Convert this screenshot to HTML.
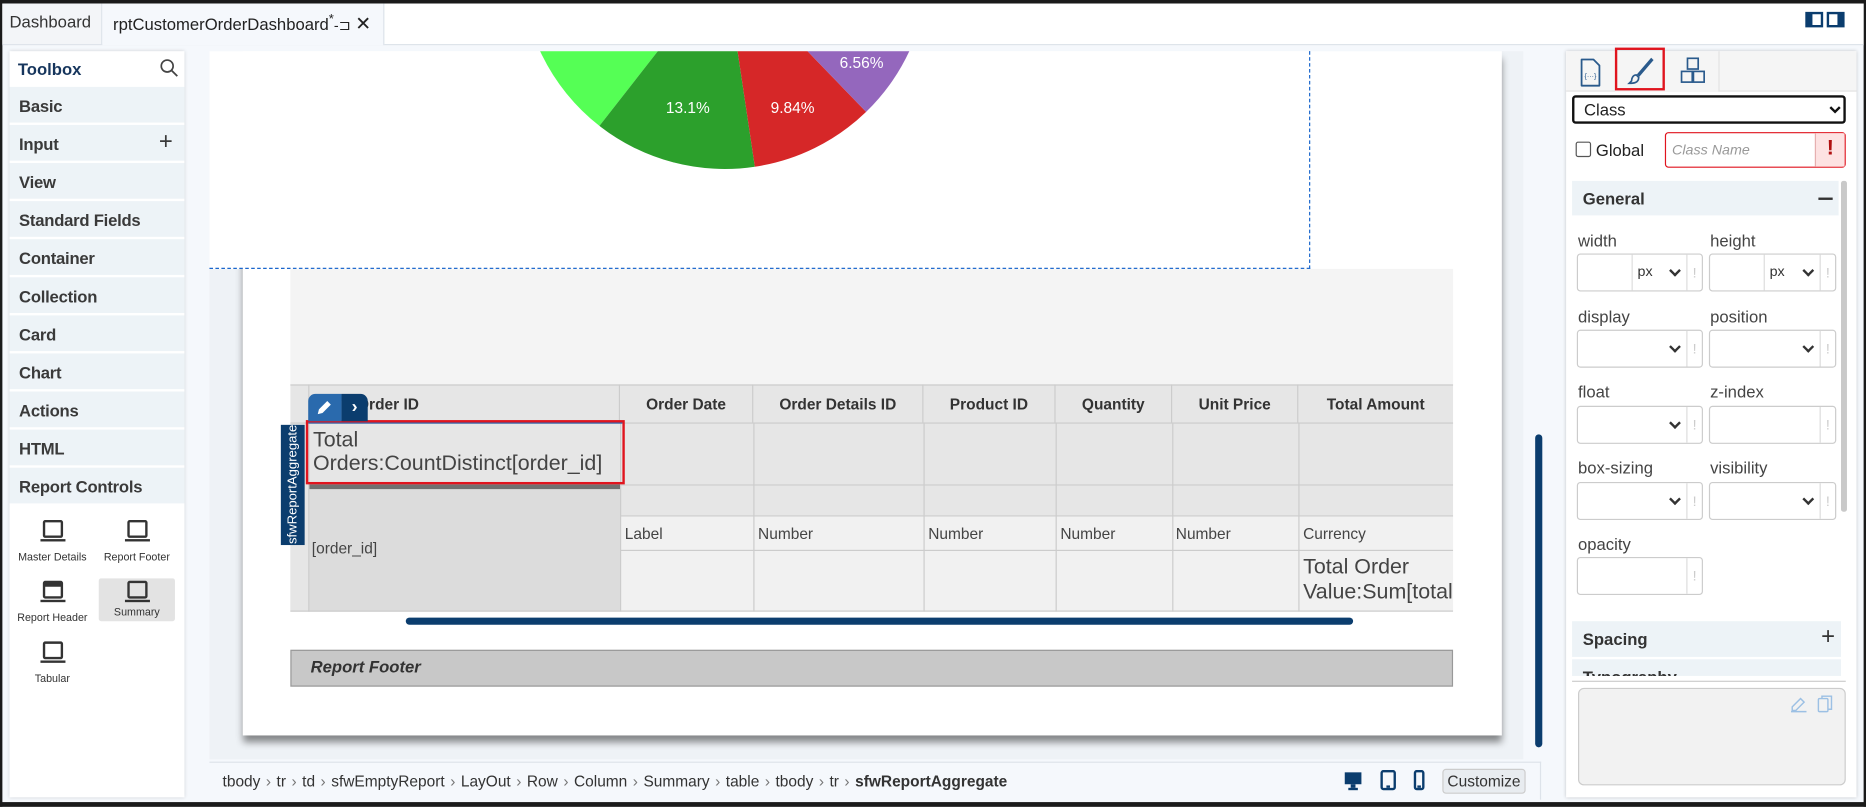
<!DOCTYPE html>
<html><head><meta charset="utf-8"><style>
*{box-sizing:border-box;margin:0;padding:0}
html,body{width:1866px;height:807px;overflow:hidden;background:#000}
#w{position:absolute;left:0;top:0;width:1568px;height:678px;transform:scale(1.19005);transform-origin:0 0;font-family:"Liberation Sans",sans-serif;color:#333;background:#f5f8fc;overflow:hidden}
.a{position:absolute}
.ti{position:absolute;left:8px;width:147px;height:30px;background:#edf3f7;font-size:14px;font-weight:bold;color:#3a3a3a;padding:8px 0 0 8px;letter-spacing:-.2px}
.tile{position:absolute;width:64px;height:49px;font-size:9px;color:#333;text-align:center;padding-top:34px;background:#fff;border-radius:2px}
.tile i{position:absolute;left:24px;top:8px;width:17px;height:15px;border:2px solid #333;border-radius:2px}
.tile i:after{content:"";position:absolute;left:-4px;right:-4px;bottom:-5px;height:2px;background:#333}
.th{position:absolute;top:323px;height:32px;font-size:13px;font-weight:bold;color:#333;text-align:center;padding-top:9px;border-right:1px solid #ccc}
.cl{position:absolute;background:#ccc}
.lb{position:absolute;font-size:14px;color:#444}
.inp{position:absolute;height:32px;border:1px solid #ccc;border-radius:3px;background:#fff}
.inp .ex{position:absolute;right:0;top:0;width:13px;height:30px;border-left:1px solid #ddd;color:#ccc;font-size:12px;text-align:center;padding-top:8px}
.inp .cv{position:absolute;top:7px;font-size:12px;color:#333}
.ch{position:absolute;top:10px;width:7px;height:7px;border-right:2px solid #333;border-bottom:2px solid #333;transform:rotate(45deg)}
.bc{font-size:13px;color:#333}
</style></head><body><div id="w">
<div class="a" style="left:0;top:0;width:1568px;height:3px;background:#1a1a1a"></div>
<div class="a" style="left:0;top:0;width:2px;height:678px;background:#1a1a1a"></div>
<div class="a" style="right:0;top:0;width:2px;height:678px;background:#1a1a1a"></div>
<div class="a" style="left:0;bottom:0;width:1568px;height:4px;background:#1a1a1a"></div>
<div class="a" style="left:2px;top:3px;width:1564px;height:35px;background:#fff;border-bottom:1px solid #dde3ea"></div>
<div class="a" style="left:2px;top:3px;width:84px;height:34px;background:#f3f5f8;border-right:1px solid #dde3ea;font-size:14px;padding:7px 0 0 6px;color:#333">Dashboard</div>
<div class="a" style="left:86px;top:3px;width:237px;height:35px;background:#f5f8fc;border-right:1px solid #dde3ea;font-size:14px;padding:7px 0 0 9px;color:#222">rptCustomerOrderDashboard<sup style="font-size:11px">*</sup><span style="font-size:12px">-⊐</span> <span style="font-size:16px">✕</span></div>
<div class="a" style="left:1517px;top:10px;width:15px;height:13px;border:2px solid #0b3d6e;border-left-width:6px"></div>
<div class="a" style="left:1535px;top:10px;width:15px;height:13px;border:2px solid #0b3d6e;border-right-width:6px"></div>
<div class="a" style="left:8px;top:43px;width:147px;height:627px;background:#fff;box-shadow:0 0 3px rgba(0,0,0,.15)"></div>
<div class="a" style="left:15px;top:50px;font-size:14px;font-weight:bold;color:#17365d">Toolbox</div>
<svg class="a" style="left:134px;top:49px" width="16" height="16" viewBox="0 0 16 16"><circle cx="6.5" cy="6.5" r="5" fill="none" stroke="#444" stroke-width="1.4"/><path d="M10 10l5 5" stroke="#444" stroke-width="1.5"/></svg>
<div class="ti" style="top:73px">Basic</div>
<div class="ti" style="top:105px">Input<span style="position:absolute;right:10px;top:3px;font-size:20px;font-weight:normal">+</span></div>
<div class="ti" style="top:137px">View</div>
<div class="ti" style="top:169px">Standard Fields</div>
<div class="ti" style="top:201px">Container</div>
<div class="ti" style="top:233px">Collection</div>
<div class="ti" style="top:265px">Card</div>
<div class="ti" style="top:297px">Chart</div>
<div class="ti" style="top:329px">Actions</div>
<div class="ti" style="top:361px">HTML</div>
<div class="ti" style="top:393px">Report Controls</div>
<div class="tile" style="left:12px;top:429px"><i></i>Master Details</div>
<div class="tile" style="left:83px;top:429px"><i></i>Report Footer</div>
<div class="tile" style="left:12px;top:480px"><i style="border-top-width:5px"></i>Report Header</div>
<div class="tile" style="left:83px;top:486px;background:#e3e3e3;padding-top:23px;height:36px"><i style="top:2px"></i>Summary</div>
<div class="tile" style="left:12px;top:531px"><i></i>Tabular</div>
<div class="a" style="left:176px;top:43px;width:1104px;height:595px;background:#eef2f6"></div>
<div class="a" style="left:204px;top:43px;width:1058px;height:575px;background:#fff;box-shadow:0 6px 6px rgba(0,0,0,.45)"></div>
<div class="a" style="left:176px;top:43px;width:925px;height:183px;background:#fff;border-right:1px dashed #1a66cc;border-bottom:1px dashed #1a66cc"></div>
<svg class="a" style="left:176px;top:43px" width="924" height="182" viewBox="176 43 924 182">
<defs><clipPath id="c"><rect x="176" y="43" width="924" height="182"/></clipPath></defs>
<g clip-path="url(#c)">
<path d="M609 -29 L503.7 105.8 A171 171 0 0 1 438 -29Z" fill="#55ff55"/>
<path d="M609 -29 L634.3 140.1 A171 171 0 0 1 503.7 105.8Z" fill="#2ca02c"/>
<path d="M609 -29 L727.8 94 A171 171 0 0 1 634.3 140.1Z" fill="#d62728"/>
<path d="M609 -29 L780 -29 A171 171 0 0 1 727.8 94Z" fill="#9467bd"/>
<text x="578" y="95" fill="#fff" font-size="13" text-anchor="middle" font-family="Liberation Sans">13.1%</text>
<text x="666" y="95" fill="#fff" font-size="13" text-anchor="middle" font-family="Liberation Sans">9.84%</text>
<text x="724" y="57" fill="#fff" font-size="13" text-anchor="middle" font-family="Liberation Sans">6.56%</text>
</g></svg>
<div class="a" style="left:244px;top:226px;width:977px;height:98px;background:#f4f4f4"></div>
<div class="a" style="left:244px;top:323px;width:977px;height:84px;background:#e6e6e6;border-top:1px solid #ccc"></div>
<div class="a" style="left:244px;top:407px;width:977px;height:26px;background:#e6e6e6"></div>
<div class="a" style="left:244px;top:433px;width:977px;height:81px;background:#f1f1f1"></div>
<div class="a" style="left:244px;top:407px;width:16px;height:107px;background:#e6e6e6"></div>
<div class="a" style="left:260px;top:407px;width:261px;height:107px;background:#dcdcdc;border-top:4px solid #707070"></div>
<div class="cl" style="left:244px;top:355px;width:977px;height:1px"></div>
<div class="cl" style="left:521px;top:407px;width:700px;height:1px"></div>
<div class="cl" style="left:521px;top:433px;width:700px;height:1px"></div>
<div class="cl" style="left:521px;top:462px;width:700px;height:1px"></div>
<div class="cl" style="left:244px;top:513px;width:977px;height:1px"></div>
<div class="cl" style="left:259px;top:323px;width:1px;height:191px"></div>
<div class="th" style="left:260px;width:261px;text-align:left;padding-left:40px">Order ID</div>
<div class="th" style="left:521px;width:112px">Order Date</div>
<div class="th" style="left:633px;width:143px">Order Details ID</div>
<div class="th" style="left:776px;width:111px">Product ID</div>
<div class="th" style="left:887px;width:98px">Quantity</div>
<div class="th" style="left:985px;width:106px">Unit Price</div>
<div class="th" style="left:1091px;width:130px;border-right:none">Total Amount</div>
<div class="cl" style="left:521px;top:355px;width:1px;height:159px"></div>
<div class="cl" style="left:633px;top:355px;width:1px;height:159px"></div>
<div class="cl" style="left:776px;top:355px;width:1px;height:159px"></div>
<div class="cl" style="left:887px;top:355px;width:1px;height:159px"></div>
<div class="cl" style="left:985px;top:355px;width:1px;height:159px"></div>
<div class="cl" style="left:1091px;top:355px;width:1px;height:159px"></div>
<div class="a" style="left:263px;top:359px;font-size:18px;line-height:20px;color:#444">Total<br>Orders:CountDistinct[order_id]</div>
<div class="a" style="left:257px;top:353px;width:268px;height:54px;border:2px solid #e0141e"></div>
<div class="a" style="left:259px;top:355px;width:264px;height:1px;background:#2a5ea8"></div>
<div class="a" style="left:262px;top:453px;font-size:13px;color:#444">[order_id]</div>
<div class="a" style="left:525px;top:441px;font-size:13px;color:#444">Label</div>
<div class="a" style="left:637px;top:441px;font-size:13px;color:#444">Number</div>
<div class="a" style="left:780px;top:441px;font-size:13px;color:#444">Number</div>
<div class="a" style="left:891px;top:441px;font-size:13px;color:#444">Number</div>
<div class="a" style="left:988px;top:441px;font-size:13px;color:#444">Number</div>
<div class="a" style="left:1095px;top:441px;font-size:13px;color:#444">Currency</div>
<div class="a" style="left:1095px;top:466px;width:126px;overflow:hidden;white-space:nowrap;font-size:18px;line-height:21px;color:#444">Total Order<br>Value:Sum[total</div>
<div class="a" style="left:259px;top:331px;width:28px;height:23px;background:#2a6aad;border-radius:6px 0 0 0"></div>
<div class="a" style="left:287px;top:331px;width:22px;height:23px;background:#0b3d6e;border-radius:0 6px 0 0;color:#fff;font-size:15px;font-weight:bold;text-align:center;line-height:22px">›</div>
<svg class="a" style="left:265px;top:335px" width="15" height="15" viewBox="0 0 15 15"><path d="M2 13l1-4 7-7 3 3-7 7z" fill="#fff"/></svg>
<div class="a" style="left:236px;top:357px;width:20px;height:101px;background:#0b3d6e"></div>
<div class="a" style="left:246px;top:407px;transform:translate(-50%,-50%) rotate(-90deg);color:#fff;font-size:11px;white-space:nowrap">sfwReportAggregate</div>
<div class="a" style="left:341px;top:519px;width:796px;height:6px;background:#0b3d6e;border-radius:3px"></div>
<div class="a" style="left:244px;top:546px;width:977px;height:31px;background:#c8c8c8;border:1px solid #999;font-size:14px;font-weight:bold;font-style:italic;color:#333;padding:5px 0 0 16px">Report Footer</div>
<div class="a" style="left:1290px;top:365px;width:6px;height:263px;background:#0b3d6e;border-radius:3px"></div>
<div class="a" style="left:176px;top:640px;width:1119px;height:32px;background:#f5f8fc;border-top:1px solid #dde3ea;border-right:1px solid #dde3ea"></div>
<div class="a bc" style="left:187px;top:649px;white-space:nowrap;word-spacing:1px">tbody <span style="color:#777">›</span> tr <span style="color:#777">›</span> td <span style="color:#777">›</span> sfwEmptyReport <span style="color:#777">›</span> LayOut <span style="color:#777">›</span> Row <span style="color:#777">›</span> Column <span style="color:#777">›</span> Summary <span style="color:#777">›</span> table <span style="color:#777">›</span> tbody <span style="color:#777">›</span> tr <span style="color:#777">›</span> <b>sfwReportAggregate</b></div>
<svg class="a" style="left:1128px;top:647px" width="78" height="18" viewBox="0 0 78 18"><rect x="2" y="2" width="14" height="10" fill="#0b3d6e"/><rect x="7" y="12" width="4" height="3" fill="#0b3d6e"/><rect x="5" y="15" width="8" height="2" fill="#0b3d6e"/><rect x="33" y="1" width="11" height="15" rx="1.5" fill="none" stroke="#0b3d6e" stroke-width="2"/><rect x="37" y="13" width="3" height="2" fill="#0b3d6e"/><rect x="61" y="1" width="7" height="15" rx="1.5" fill="none" stroke="#0b3d6e" stroke-width="2"/><rect x="63" y="13" width="3" height="2" fill="#0b3d6e"/></svg>
<div class="a" style="left:1212px;top:646px;width:70px;height:21px;background:#e8ecf0;border:1px solid #ccc;border-radius:3px;font-size:13px;color:#333;text-align:center;padding-top:2px">Customize</div>
<div class="a" style="left:1316px;top:43px;width:244px;height:627px;background:#fff;box-shadow:0 0 3px rgba(0,0,0,.2)"></div>
<div class="a" style="left:1316px;top:43px;width:244px;height:34px;background:#f5f5f5;border-bottom:1px solid #e3e3e3"></div>
<div class="a" style="left:1357px;top:43px;width:88px;height:34px;background:#f5f5f5;border-right:1px solid #e3e3e3"></div>
<svg class="a" style="left:1326px;top:47px" width="22" height="28" viewBox="0 0 22 28"><path d="M3 3h10l5 5v17H3z" fill="none" stroke="#2a5a8c" stroke-width="1.5" stroke-linejoin="round"/><text x="10.5" y="19" font-size="6" text-anchor="middle" fill="#2a5a8c" font-family="Liberation Sans">{···}</text></svg>
<div class="a" style="left:1357px;top:40px;width:42px;height:36px;border:2px solid #e0141e"></div>
<svg class="a" style="left:1366px;top:47px" width="26" height="26" viewBox="0 0 26 26"><path d="M22 2 L10 16 M23 3 L11 17" stroke="#2a5a8c" stroke-width="1.4" fill="none"/><path d="M9 16c-3 0-4 3-4 5-1 1-2 2-2 2 3 0 8 0 8-5z" fill="none" stroke="#2a5a8c" stroke-width="1.4"/></svg>
<svg class="a" style="left:1410px;top:47px" width="26" height="26" viewBox="0 0 26 26"><rect x="8" y="2" width="9" height="9" fill="none" stroke="#2a5a8c" stroke-width="1.4"/><rect x="3" y="13" width="9" height="9" fill="none" stroke="#2a5a8c" stroke-width="1.4"/><rect x="13" y="13" width="9" height="9" fill="none" stroke="#2a5a8c" stroke-width="1.4"/></svg>
<div class="a" style="left:1321px;top:80px;width:230px;height:24px;border:2px solid #111;border-radius:3px;font-size:14px;padding:2px 0 0 8px;color:#222">Class</div>
<svg class="a" style="left:1536px;top:87px" width="12" height="10" viewBox="0 0 12 10"><path d="M2 3l4 4 4-4" stroke="#111" stroke-width="2" fill="none"/></svg>
<div class="a" style="left:1324px;top:119px;width:13px;height:13px;border:1px solid #555;border-radius:2px;background:#fff"></div>
<div class="a" style="left:1341px;top:118px;font-size:14px;color:#222">Global</div>
<div class="a" style="left:1399px;top:111px;width:152px;height:30px;border:1px solid #e0141e;border-radius:3px;background:#fff;font-size:12px;font-style:italic;color:#999;padding:7px 0 0 5px">Class Name</div>
<div class="a" style="left:1525px;top:112px;width:25px;height:28px;background:#fde2e2;border-left:1px solid #e6b0b0;color:#b01010;font-size:18px;font-weight:bold;text-align:center;padding-top:2px">!</div>
<div class="a" style="left:1321px;top:152px;width:224px;height:29px;background:#edf3f7;font-size:14px;font-weight:bold;color:#333;padding:7px 0 0 9px">General</div>
<div class="a" style="left:1528px;top:166px;width:12px;height:1.5px;background:#333"></div>
<div class="a" style="left:1547px;top:152px;width:5px;height:278px;background:#c9c9c9;border-radius:2px"></div>
<div class="lb" style="left:1326px;top:194px">width</div><div class="lb" style="left:1437px;top:194px">height</div>
<div class="inp" style="left:1325px;top:213px;width:106px"><span style="position:absolute;left:45px;top:0;height:30px;border-left:1px solid #ddd"></span><span class="cv" style="left:50px">px</span><span class="ch" style="left:78px"></span><span class="ex">!</span></div>
<div class="inp" style="left:1436px;top:213px;width:107px"><span style="position:absolute;left:45px;top:0;height:30px;border-left:1px solid #ddd"></span><span class="cv" style="left:50px">px</span><span class="ch" style="left:79px"></span><span class="ex">!</span></div>
<div class="lb" style="left:1326px;top:258px">display</div><div class="lb" style="left:1437px;top:258px">position</div>
<div class="inp" style="left:1325px;top:277px;width:106px"><span class="ch" style="left:78px"></span><span class="ex">!</span></div>
<div class="inp" style="left:1436px;top:277px;width:107px"><span class="ch" style="left:79px"></span><span class="ex">!</span></div>
<div class="lb" style="left:1326px;top:321px">float</div><div class="lb" style="left:1437px;top:321px">z-index</div>
<div class="inp" style="left:1325px;top:341px;width:106px"><span class="ch" style="left:78px"></span><span class="ex">!</span></div>
<div class="inp" style="left:1436px;top:341px;width:107px"><span class="ex">!</span></div>
<div class="lb" style="left:1326px;top:385px">box-sizing</div><div class="lb" style="left:1437px;top:385px">visibility</div>
<div class="inp" style="left:1325px;top:405px;width:106px"><span class="ch" style="left:78px"></span><span class="ex">!</span></div>
<div class="inp" style="left:1436px;top:405px;width:107px"><span class="ch" style="left:79px"></span><span class="ex">!</span></div>
<div class="lb" style="left:1326px;top:449px">opacity</div>
<div class="inp" style="left:1325px;top:468px;width:106px"><span class="ex">!</span></div>
<div class="a" style="left:1321px;top:522px;width:226px;height:30px;background:#edf3f7;font-size:14px;font-weight:bold;color:#333;padding:7px 0 0 9px">Spacing<span style="position:absolute;right:5px;top:2px;font-weight:normal;font-size:20px">+</span></div>
<div class="a" style="left:1321px;top:554px;width:226px;height:14px;background:#edf3f7;overflow:hidden;font-size:14px;font-weight:bold;color:#333;padding:7px 0 0 9px">Typography</div>
<div class="a" style="left:1321px;top:572px;width:230px;height:1px;background:#ccc"></div>
<div class="a" style="left:1326px;top:578px;width:225px;height:82px;background:#f2f2f2;border:1px solid #ccc;border-radius:5px"></div>
<svg class="a" style="left:1503px;top:582px" width="42" height="18" viewBox="0 0 42 18"><path d="M3 12l7-7 3 3-7 7H3z M2 16h13" stroke="#9cc0e4" stroke-width="1.2" fill="none"/><rect x="25" y="5" width="8" height="11" rx="1" fill="none" stroke="#9cc0e4" stroke-width="1.2"/><path d="M28 5V3h8v11h-3" stroke="#9cc0e4" stroke-width="1.2" fill="none"/></svg>
</div></body></html>
